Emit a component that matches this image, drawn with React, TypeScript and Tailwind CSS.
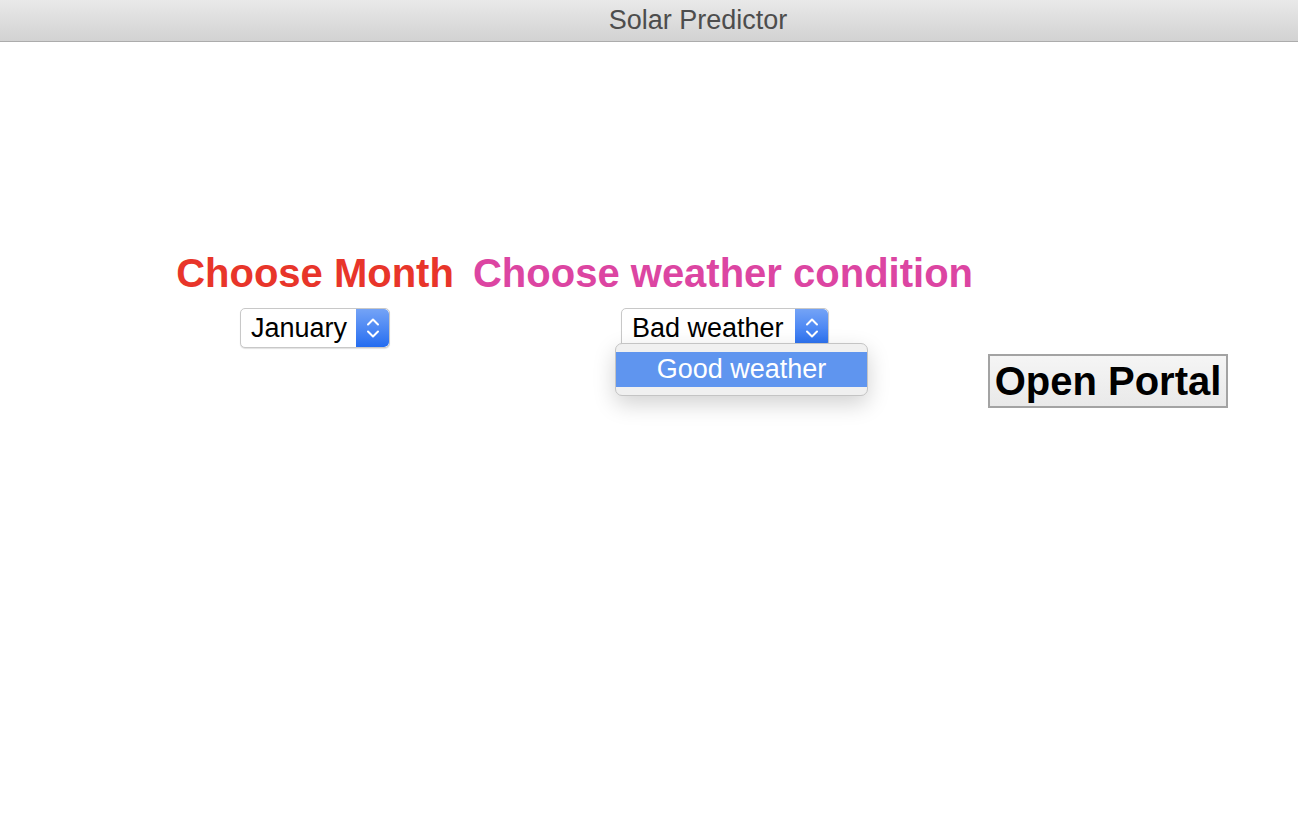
import React from 'react';

const Stepper = () => (
  <div className="w-[33px] h-full rounded-r-[5px] bg-gradient-to-b from-[#74a3f6] to-[#236cf0] flex items-center justify-center">
    <svg width="16" height="24" viewBox="0 0 16 24" fill="none" stroke="white" strokeWidth="2" strokeLinecap="round" strokeLinejoin="round">
      <path d="M3 8.5 L8 3.5 L13 8.5" />
      <path d="M3 15.5 L8 20.5 L13 15.5" />
    </svg>
  </div>
);

const PopSelect = ({ value, width }: { value: string; width: string }) => (
  <div className={`flex h-[40px] ${width} bg-white border border-[#c8c8c8] rounded-[5px] shadow-[0_1px_1px_rgba(0,0,0,0.12)] overflow-hidden`}>
    <div className="flex-1 flex items-center pl-[10px] text-[27px] text-black font-['Liberation_Sans',sans-serif]">
      {value}
    </div>
    <Stepper />
  </div>
);

export default function App() {
  return (
    <div className="w-[1298px] h-[828px] bg-white overflow-hidden font-['Liberation_Sans',Arial,sans-serif]">
      {/* title bar */}
      <div className="h-[42px] bg-gradient-to-b from-[#e9e9e9] to-[#d2d2d2] border-b border-[#acacac] flex items-center justify-center pl-[98px]">
        <span className="text-[27px] text-[#4d4d4d] leading-none">Solar Predictor</span>
      </div>

      <div className="grid grid-cols-[286px_516px_240px] ml-[172px] mt-[208px]">
        <div className="flex justify-center">
          <h2 className="text-[40px] leading-[46px] font-bold text-[#e8352a]">Choose Month</h2>
        </div>
        <div className="flex justify-center ml-[14px]">
          <h2 className="text-[40px] leading-[46px] font-bold text-[#dc45a2]">Choose weather condition</h2>
        </div>
        <div />

        <div className="flex justify-center mt-[12px]">
          <PopSelect value="January" width="w-[150px]" />
        </div>
        <div className="flex justify-center mt-[12px] ml-[18px]">
          <div className="relative">
            <PopSelect value="Bad weather" width="w-[208px]" />
            {/* open popup menu */}
            <div className="absolute left-[-6px] top-[35px] w-[253px] h-[53px] rounded-[7px] bg-[#f0f0f0] border border-[#c4c4c4] shadow-[0_8px_22px_rgba(0,0,0,0.18)] pt-[8px]">
              <div className="h-[35px] bg-[#5f95ef] flex items-center justify-center text-[27px] text-white">
                Good weather
              </div>
            </div>
          </div>
        </div>
        <div className="mt-[58px] ml-[14px]">
          <button className="w-[240px] h-[54px] border-2 border-[#a3a3a3] bg-gradient-to-b from-[#f5f5f5] to-[#e9e9e9] text-[40px] font-bold text-black leading-none flex items-center justify-center">
            Open Portal
          </button>
        </div>
      </div>
    </div>
  );
}
